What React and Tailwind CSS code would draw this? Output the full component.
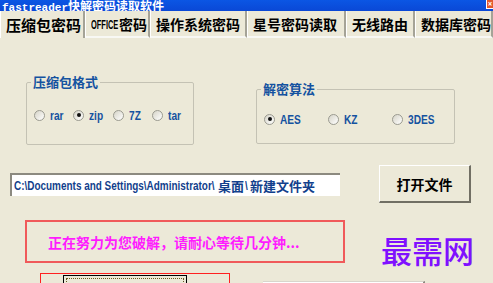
import React from 'react';

const sans = '"Liberation Sans","Noto Sans CJK SC",sans-serif';
const cjk = '"Noto Sans CJK SC","Liberation Sans",sans-serif';

// narrow latin text: fixed box, glyphs squeezed horizontally
const Squeeze = ({ w, children, className = '' }) => (
    <span className={`inline-block overflow-visible whitespace-nowrap align-middle ${w}`}>
        <span className={`inline-block origin-left ${className}`} style={{ fontFamily: sans }}>{children}</span>
    </span>
);

// XP-style radio
const Radio = ({ checked, label, lw, className = '' }) => (
    <div className={`flex items-center h-[14px] ${className}`}>
        <span className="w-[11px] h-[11px] rounded-full border border-[#9a9a90] bg-gradient-to-br from-[#d6d4c8] to-white flex items-center justify-center shrink-0">
            {checked && <span className="w-[4px] h-[4px] rounded-full bg-[#101010]" />}
        </span>
        <span className="ml-[5px] text-[13px] font-bold text-[#1452a0] leading-none flex items-center">
            <Squeeze w={lw} className="scale-x-[0.78]">{label}</Squeeze>
        </span>
    </div>
);

const tabs = [
    { label: '压缩包密码', w: 'w-[85px]', active: true },
    { label: 'OFFICE', w: 'w-[65px]', office: true },
    { label: '操作系统密码', w: 'w-[97px]' },
    { label: '星号密码读取', w: 'w-[99px]' },
    { label: '无线路由', w: 'w-[69px]' },
    { label: '数据库密码', w: 'w-[78px]' },
];

export default function App() {
    return (
        <div className="w-[493px] h-[283px] overflow-hidden bg-[#ece9d8] flex flex-col">
            {/* --- Title bar --- */}
            <div className="h-[11px] shrink-0 flex items-start bg-gradient-to-b from-[#0b56e4] to-[#0a48d6] overflow-hidden">
                <div className="pl-[2px] leading-[11px] text-white font-bold whitespace-nowrap">
                    <span className="text-[11px]" style={{ fontFamily: '"Liberation Mono",monospace' }}>fastreader</span>
                    <span className="text-[12px]" style={{ fontFamily: cjk }}>快解密码读取软件</span>
                </div>
                <div className="ml-auto w-[7px] h-[9px] bg-[#e2582c] border-l border-b border-white flex items-center justify-center text-white text-[8px] font-bold leading-none">×</div>
            </div>

            {/* --- Tabs --- */}
            <div className="h-[27px] shrink-0 flex">
                {tabs.map((t, i) => (
                    <div
                        key={i}
                        className={`${t.w} h-full flex items-center pl-[5px] whitespace-nowrap border-r-2 border-r-[#a5a397] ${t.active ? 'border-l border-l-white' : 'border-b-2 border-b-[#f8f8f4] border-l border-l-white'}`}
                    >
                        {t.office ? (
                            <span className="text-[14px] font-bold text-black leading-none flex items-center">
                                <Squeeze w="w-[28px]" className="text-[12px] scale-x-[0.62]">OFFICE</Squeeze>
                                <span style={{ fontFamily: cjk }}>密码</span>
                            </span>
                        ) : (
                            <span className={`font-bold text-black leading-none ${t.active ? 'text-[15px]' : 'text-[14px]'}`} style={{ fontFamily: cjk }}>{t.label}</span>
                        )}
                    </div>
                ))}
            </div>

            {/* --- Group boxes --- */}
            <div className="flex items-start h-[107px] shrink-0">
                <fieldset className="ml-[26px] mt-[37px] w-[168px] h-[70px] border border-[#c4c2b4] rounded-[2px]">
                    <legend className="ml-[4px] px-[2px] text-[13px] font-bold text-[#1452a0] leading-[14px]" style={{ fontFamily: cjk }}>压缩包格式</legend>
                    <div className="flex pt-[19px] pl-[7px]">
                        <Radio label="rar" lw="w-[14px]" className="w-[39px]" />
                        <Radio label="zip" lw="w-[14px]" checked className="w-[40px]" />
                        <Radio label="7Z" lw="w-[11px]" className="w-[39px]" />
                        <Radio label="tar" lw="w-[14px]" />
                    </div>
                </fieldset>
                <fieldset className="ml-[62px] mt-[44px] w-[199px] h-[62px] border border-[#c4c2b4] rounded-[2px]">
                    <legend className="ml-[4px] px-[2px] text-[13px] font-bold text-[#1452a0] leading-[14px]" style={{ fontFamily: cjk }}>解密算法</legend>
                    <div className="flex pt-[16px] pl-[7px]">
                        <Radio label="AES" lw="w-[16px]" checked className="w-[64px]" />
                        <Radio label="KZ" lw="w-[11px]" className="w-[64px]" />
                        <Radio label="3DES" lw="w-[22px]" />
                    </div>
                </fieldset>
            </div>

            {/* --- Path + open button --- */}
            <div className="flex items-center mt-[20px] shrink-0">
                <div className="ml-[10px] w-[330px] h-[23px] bg-white border-t-2 border-l-2 border-t-[#8c8a80] border-l-[#8c8a80] flex items-center pl-[2px] whitespace-nowrap overflow-hidden">
                    <span className="text-[13px] font-bold text-[#123f8c] leading-none flex items-center">
                        <Squeeze w="w-[203px]" className="scale-x-[0.765]">C:\Documents and Settings\Administrator\</Squeeze>
                        <span style={{ fontFamily: cjk }} className="px-[1px]">桌面</span>
                        <Squeeze w="w-[4px]" className="scale-x-[0.765]">\</Squeeze>
                        <span style={{ fontFamily: cjk }} className="px-[1px]">新建文件夹</span>
                    </span>
                </div>
                <button className="ml-[39px] w-[92px] h-[38px] bg-[#ece9d8] border-t border-l border-t-white border-l-white border-r-2 border-b-2 border-r-[#716f64] border-b-[#716f64] flex items-center justify-center">
                    <span className="text-[14px] font-bold text-black leading-none" style={{ fontFamily: cjk }}>打开文件</span>
                </button>
            </div>

            {/* --- Progress message + logo --- */}
            <div className="flex items-start mt-[17px] shrink-0">
                <div className="ml-[25px] w-[320px] h-[43px] border-2 border-[#f05a5a] flex items-center pl-[21px]">
                    <span className="text-[14px] font-bold text-[#ff1cff] leading-none whitespace-nowrap" style={{ fontFamily: cjk }}>正在努力为您破解，请耐心等待几分钟...</span>
                </div>
                <div className="ml-[36px] mt-[14px] text-[31px] font-medium leading-none text-[#7f10ff] whitespace-nowrap" style={{ fontFamily: cjk }}>最需网</div>
            </div>

            {/* --- Bottom controls (cut off) --- */}
            <div className="flex items-start mt-[8px] shrink-0">
                <div className="ml-[40px] w-[190px] h-[20px] border border-[#ff2020] pt-[1px] pl-[22px]">
                    <div className="w-[124px] h-[18px] border border-black bg-[#ece9d8] p-[2px]">
                        <div className="w-full h-full border border-dotted border-[#6a5a20]" />
                    </div>
                </div>
                <div className="ml-[33px] mt-[8px] w-[162px] h-[10px] bg-white border-r-2 border-r-[#8c8a80] border-t border-t-[#d8d6cc]" />
            </div>
        </div>
    );
}
